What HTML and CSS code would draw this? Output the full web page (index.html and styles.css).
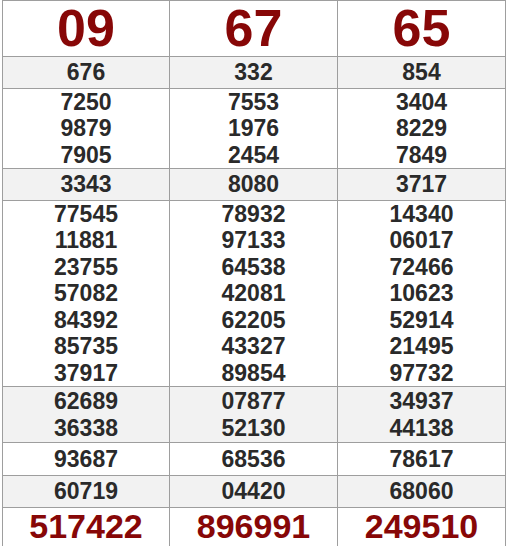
FILE: index.html
```html
<!DOCTYPE html>
<html>
<head>
<meta charset="utf-8">
<link rel="stylesheet" href="styles.css">
</head>
<body>
<div class="board">
  <div class="cell head">09</div>
  <div class="cell head">67</div>
  <div class="cell head">65</div>

  <div class="cell alt"><span>676</span></div>
  <div class="cell alt"><span>332</span></div>
  <div class="cell alt"><span>854</span></div>

  <div class="cell"><span>7250</span><span>9879</span><span>7905</span></div>
  <div class="cell"><span>7553</span><span>1976</span><span>2454</span></div>
  <div class="cell"><span>3404</span><span>8229</span><span>7849</span></div>

  <div class="cell alt"><span>3343</span></div>
  <div class="cell alt"><span>8080</span></div>
  <div class="cell alt"><span>3717</span></div>

  <div class="cell"><span>77545</span><span>11881</span><span>23755</span><span>57082</span><span>84392</span><span>85735</span><span>37917</span></div>
  <div class="cell"><span>78932</span><span>97133</span><span>64538</span><span>42081</span><span>62205</span><span>43327</span><span>89854</span></div>
  <div class="cell"><span>14340</span><span>06017</span><span>72466</span><span>10623</span><span>52914</span><span>21495</span><span>97732</span></div>

  <div class="cell alt"><span>62689</span><span>36338</span></div>
  <div class="cell alt"><span>07877</span><span>52130</span></div>
  <div class="cell alt"><span>34937</span><span>44138</span></div>

  <div class="cell"><span>93687</span></div>
  <div class="cell"><span>68536</span></div>
  <div class="cell"><span>78617</span></div>

  <div class="cell alt"><span>60719</span></div>
  <div class="cell alt"><span>04420</span></div>
  <div class="cell alt"><span>68060</span></div>

  <div class="cell special">517422</div>
  <div class="cell special">896991</div>
  <div class="cell special">249510</div>
</div>
</body>
</html>
```

FILE: styles.css
```css
html, body {
  margin: 0;
  padding: 0;
  background: #ffffff;
}

body {
  font-family: "Liberation Sans", Arial, sans-serif;
  overflow: hidden;
}

.board {
  margin-left: 2px;
  display: grid;
  grid-template-columns: 166px 167px 167px;
  grid-template-rows: 55px 31px 79px 31px 185px 55px 32px 31px 60px;
  gap: 1px;
  padding: 1px;
  background: #9e9e9e;
  width: max-content;
}

.cell {
  background: #ffffff;
  display: flex;
  flex-direction: column;
  align-items: center;
  justify-content: center;
  font-weight: bold;
  font-size: 23px;
  line-height: 26.4px;
  color: #2a2a2a;
}

.cell.alt {
  background: #f2f2f2;
}

.cell.head {
  font-size: 52px;
  line-height: 55px;
  color: #870707;
}

.cell.special {
  justify-content: flex-start;
  font-size: 34px;
  line-height: 36px;
  color: #870707;
}
```
